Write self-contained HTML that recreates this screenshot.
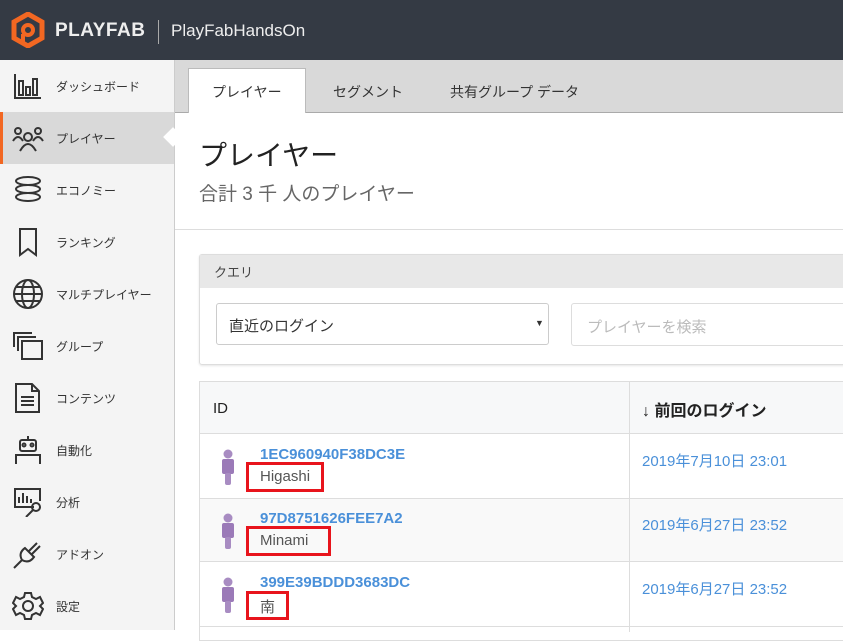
<!DOCTYPE html>
<html><head><meta charset="utf-8"><style>
*{margin:0;padding:0;box-sizing:border-box}
body{width:843px;height:630px;overflow:hidden;position:relative;background:#fff;font-family:"Liberation Sans","Noto Sans CJK JP",sans-serif;color:#333}
.a{position:absolute}
.hdr{left:0;top:0;width:843px;height:60px;background:#343a44}
.side{left:0;top:60px;width:175px;height:570px;background:#f4f4f4;border-right:1px solid #ccc}
.it{position:absolute;left:0;width:174px;height:52px}
.it span{position:absolute;left:56px;top:18px;font-size:12px;color:#333}
.it svg{position:absolute;left:12px;top:11px}
.tabs{left:175px;top:60px;width:668px;height:53px;background:#d9d9d9;border-bottom:1px solid #aaa}
.tab{font-size:14px;color:#333}
.red{border:3px solid #e8141c}
.id{font-size:15px;color:#4a90d9;font-weight:bold}
.dt{font-size:15px;color:#4a90d9}
.nm{font-size:15px;color:#555}
</style></head><body>
<div class="a hdr"></div>
<svg class="a" style="left:10px;top:12px" width="36" height="36" viewBox="0 0 36 36"><path d="M18 2 L32 10 L32 26 L18 34 L4 26 L4 10 Z" fill="none" stroke="#f26722" stroke-width="5"/><circle cx="18" cy="18" r="5" fill="none" stroke="#f26722" stroke-width="4"/><path d="M13 22 L13 31" stroke="#f26722" stroke-width="4"/></svg>
<div class="a" style="left:55px;top:20px;font-size:19px;font-weight:bold;color:#eee;letter-spacing:0.5px">PLAYFAB</div>
<div class="a" style="left:158px;top:20px;width:1px;height:24px;background:#aaa"></div>
<div class="a" style="left:171px;top:21px;font-size:17px;color:#eee">PlayFabHandsOn</div>

<div class="a side">
<div class="it" style="top:0"><svg width="32" height="30" viewBox="0 0 32 30" fill="none" stroke="#333" stroke-width="2"><path d="M3 3V27H29"/><rect x="7" y="10" width="4" height="14"/><rect x="14" y="16" width="4" height="8"/><rect x="21" y="8" width="4" height="16"/></svg><span>ダッシュボード</span></div>
<div class="it" style="top:52px;background:#d9d9d9;border-left:3px solid #f26722"><svg width="32" height="30" viewBox="0 0 32 30" fill="none" stroke="#333" stroke-width="2" style="left:9px"><circle cx="6" cy="8" r="3"/><circle cx="26" cy="8" r="3"/><circle cx="16" cy="14" r="4"/><path d="M1 18q5-8 10 0M21 18q5-8 10 0M8 28q8-14 16 0"/></svg><span style="left:53px">プレイヤー</span></div>
<div class="it" style="top:104px"><svg width="32" height="30" viewBox="0 0 32 30" fill="none" stroke="#333" stroke-width="2"><ellipse cx="16" cy="6" rx="12" ry="4"/><ellipse cx="16" cy="14" rx="12" ry="4"/><ellipse cx="16" cy="22" rx="12" ry="4"/></svg><span>エコノミー</span></div>
<div class="it" style="top:156px"><svg width="32" height="30" viewBox="0 0 32 30" fill="none" stroke="#333" stroke-width="2"><path d="M8 2H24V28L16 22L8 28Z"/></svg><span>ランキング</span></div>
<div class="it" style="top:208px"><svg width="32" height="30" viewBox="0 0 32 30" fill="none" stroke="#333" stroke-width="2"><circle cx="16" cy="15" r="14"/><ellipse cx="16" cy="15" rx="6" ry="14"/><path d="M2 15H30M4 8H28M4 22H28"/></svg><span>マルチプレイヤー</span></div>
<div class="it" style="top:260px"><svg width="32" height="30" viewBox="0 0 32 30" fill="none" stroke="#333" stroke-width="2"><path d="M2 16V2H20M6 20V6H24"/><rect x="10" y="10" width="20" height="18"/></svg><span>グループ</span></div>
<div class="it" style="top:312px"><svg width="32" height="30" viewBox="0 0 32 30" fill="none" stroke="#333" stroke-width="2"><path d="M4 1H20L27 8V29H4Z M20 1V8H27 M9 14H22M9 18H22M9 22H22"/></svg><span>コンテンツ</span></div>
<div class="it" style="top:364px"><svg width="32" height="30" viewBox="0 0 32 30" fill="none" stroke="#333" stroke-width="2"><path d="M16 1V5"/><rect x="8" y="5" width="16" height="11" rx="2"/><circle cx="12" cy="10" r="1.5"/><circle cx="20" cy="10" r="1.5"/><path d="M4 29V20H28V29"/></svg><span>自動化</span></div>
<div class="it" style="top:416px"><svg width="32" height="30" viewBox="0 0 32 30" fill="none" stroke="#333" stroke-width="2"><path d="M22 20H3V2H28V14"/><path d="M7 16V10M11 16V6M15 16V9M19 16V12"/><circle cx="24" cy="20" r="4"/><path d="M21 23L14 30"/></svg><span>分析</span></div>
<div class="it" style="top:468px"><svg width="32" height="30" viewBox="0 0 32 30" fill="none" stroke="#333" stroke-width="2"><path d="M2 29L10 21M10 21Q6 14 13 9L22 18Q17 25 10 21M17 12L25 4M20 15L28 7"/></svg><span>アドオン</span></div>
<div class="it" style="top:520px"><svg width="32" height="30" viewBox="0 0 32 30" fill="none" stroke="#333" stroke-width="2"><circle cx="16" cy="15" r="5"/><path d="M13 2H19L20 6L24 8L28 6L31 12L28 15L31 18L28 24L24 22L20 24L19 28H13L12 24L8 22L4 24L1 18L4 15L1 12L4 6L8 8L12 6Z"/></svg><span>設定</span></div>
</div>
<div class="a" style="left:166px;top:130px;width:14px;height:14px;background:#fff;transform:rotate(45deg)"></div>

<div class="a tabs"></div>
<div class="a" style="left:188px;top:68px;width:118px;height:45px;background:#fff;border:1px solid #bbb;border-bottom:none"></div>
<div class="a tab" style="left:212px;top:82px">プレイヤー</div>
<div class="a tab" style="left:333px;top:82px">セグメント</div>
<div class="a tab" style="left:450px;top:82px">共有グループ データ</div>

<div class="a" style="left:199px;top:134px;font-size:28px;color:#222">プレイヤー</div>
<div class="a" style="left:199px;top:179px;font-size:19px;color:#666">合計 3 千 人のプレイヤー</div>
<div class="a" style="left:175px;top:229px;width:668px;height:1px;background:#ddd"></div>

<div class="a" style="left:199px;top:254px;width:650px;height:111px;border:1px solid #ddd;border-radius:3px;box-shadow:0 1px 2px rgba(0,0,0,.1)"></div>
<div class="a" style="left:200px;top:255px;width:650px;height:33px;background:#e8e8e8"></div>
<div class="a" style="left:214px;top:262px;font-size:13px;color:#444">クエリ</div>
<div class="a" style="left:216px;top:303px;width:333px;height:42px;border:1px solid #ccc;border-radius:3px"></div>
<div class="a" style="left:229px;top:315px;font-size:15px;color:#333">直近のログイン</div>
<div class="a" style="left:535px;top:318px;font-size:9px;color:#333">▼</div>
<div class="a" style="left:571px;top:303px;width:290px;height:43px;border:1px solid #ddd;border-radius:3px"></div>
<div class="a" style="left:587px;top:316px;font-size:15px;color:#bbb">プレイヤーを検索</div>

<div class="a" style="left:199px;top:381px;width:650px;height:260px;border:1px solid #ddd"></div>
<div class="a" style="left:200px;top:382px;width:650px;height:52px;background:#f7f8f9;border-bottom:1px solid #ddd"></div>
<div class="a" style="left:629px;top:382px;width:1px;height:250px;background:#ddd"></div>
<div class="a" style="left:213px;top:400px;font-size:15px;color:#222">ID</div>
<div class="a" style="left:642px;top:397px;font-size:16px;font-weight:bold;color:#222">↓ 前回のログイン</div>
<div class="a" style="left:200px;top:498px;width:429px;height:64px;background:#f9f9f9;border-top:1px solid #ddd;border-bottom:1px solid #ddd"></div>
<div class="a" style="left:630px;top:498px;width:220px;height:64px;background:#f9f9f9;border-top:1px solid #ddd;border-bottom:1px solid #ddd"></div>
<div class="a" style="left:200px;top:626px;width:650px;height:1px;background:#ddd"></div>

<svg class="a" style="left:221px;top:449px" width="14" height="36" viewBox="0 0 14 36"><circle cx="7" cy="5" r="4.5" fill="#a88cc2"/><rect x="1" y="10" width="12" height="15" rx="2" fill="#9b7ab8"/><rect x="4" y="24" width="6" height="12" rx="2" fill="#a88cc2"/></svg>
<svg class="a" style="left:221px;top:513px" width="14" height="36" viewBox="0 0 14 36"><circle cx="7" cy="5" r="4.5" fill="#a88cc2"/><rect x="1" y="10" width="12" height="15" rx="2" fill="#9b7ab8"/><rect x="4" y="24" width="6" height="12" rx="2" fill="#a88cc2"/></svg>
<svg class="a" style="left:221px;top:577px" width="14" height="36" viewBox="0 0 14 36"><circle cx="7" cy="5" r="4.5" fill="#a88cc2"/><rect x="1" y="10" width="12" height="15" rx="2" fill="#9b7ab8"/><rect x="4" y="24" width="6" height="12" rx="2" fill="#a88cc2"/></svg>

<div class="a id" style="left:260px;top:446px">1EC960940F38DC3E</div>
<div class="a id" style="left:260px;top:510px">97D8751626FEE7A2</div>
<div class="a id" style="left:260px;top:574px">399E39BDDD3683DC</div>
<div class="a red" style="left:246px;top:462px;width:78px;height:30px"></div>
<div class="a red" style="left:246px;top:526px;width:85px;height:30px"></div>
<div class="a red" style="left:246px;top:591px;width:43px;height:29px"></div>
<div class="a nm" style="left:260px;top:468px">Higashi</div>
<div class="a nm" style="left:260px;top:532px">Minami</div>
<div class="a nm" style="left:260px;top:596px">南</div>
<div class="a dt" style="left:642px;top:450px">2019年7月10日 23:01</div>
<div class="a dt" style="left:642px;top:514px">2019年6月27日 23:52</div>
<div class="a dt" style="left:642px;top:578px">2019年6月27日 23:52</div>
</body></html>
